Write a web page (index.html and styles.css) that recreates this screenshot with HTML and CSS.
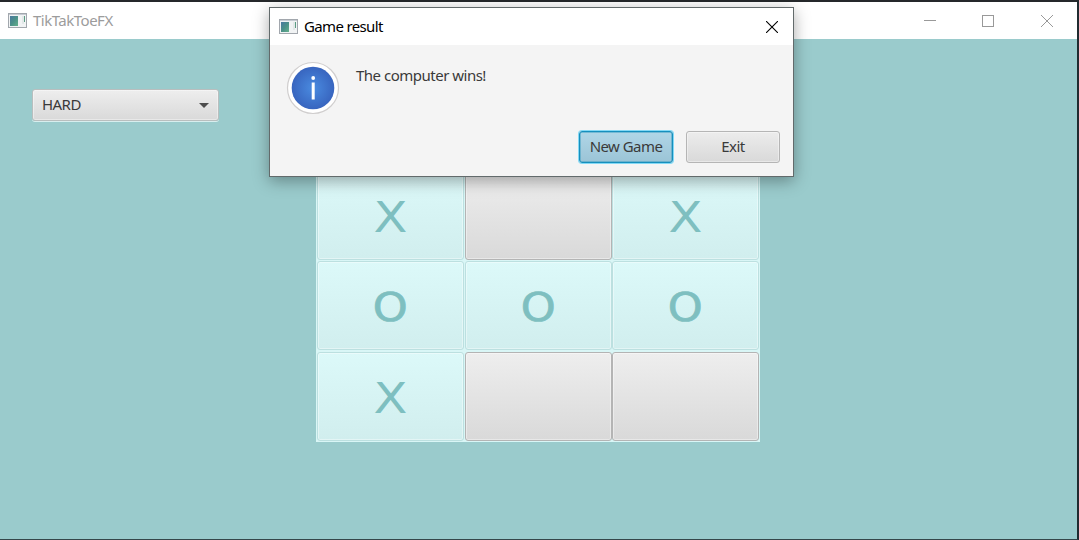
FILE: index.html
```html
<!DOCTYPE html>
<html lang="en">
<head>
<meta charset="utf-8">
<title>TikTakToeFX</title>
<link rel="stylesheet" href="styles.css">
</head>
<body>
<svg width="0" height="0" class="defs">
  <defs>
    <linearGradient id="pane" x1="0" y1="0" x2="1" y2="1"><stop offset="0" stop-color="#4a78a0"/><stop offset=".5" stop-color="#4b9088"/><stop offset="1" stop-color="#65b08c"/></linearGradient>
    <radialGradient id="info"><stop offset="0" stop-color="#4a8be0"/><stop offset="1" stop-color="#3865bf"/></radialGradient>
    <symbol id="app" viewBox="0 0 19 16">
      <rect x=".5" y=".5" width="18" height="14" fill="#f1f3f4" stroke="#a2a7ad"/>
      <path d="M1 1.500h17" stroke="#c6cbd2"/>
      <rect x="2" y="3" width="8" height="10" fill="url(#pane)"/>
      <path d="M16.500 3v6" stroke="#5c9c83"/>
      <path d="M14 3h2v8h-2z" fill="#e2e8e8"/>
    </symbol>
  </defs>
</svg>
<div class="window">
  <header class="titlebar">
    <svg class="app-icon" width="19" height="16"><use href="#app"/></svg>
    <span class="title">TikTakToeFX</span>
    <div class="controls">
      <svg width="12" height="12"><path d="M0 5.500h12" stroke="#999"/></svg>
      <svg width="12" height="12"><rect x=".5" y=".5" width="11" height="11" fill="none" stroke="#999"/></svg>
      <svg width="12" height="12"><path d="M0 0l12 12M12 0L0 12" stroke="#999"/></svg>
    </div>
  </header>
  <main class="scene">
    <div class="combo"><span class="combo-label">HARD</span><svg width="10" height="5"><path d="M0 0h10L5 5z" fill="#4d4d4d"/></svg></div>
    <div class="board">
      <div class="cell played"><span class="x">X</span></div><div class="cell"></div><div class="cell played"><span class="x">X</span></div>
      <div class="cell played"><span class="o">O</span></div><div class="cell played"><span class="o">O</span></div><div class="cell played"><span class="o">O</span></div>
      <div class="cell played"><span class="x">X</span></div><div class="cell"></div><div class="cell"></div>
    </div>
  </main>
</div>
<section class="dialog">
  <header class="dialog-bar">
    <svg class="app-icon" width="19" height="16"><use href="#app"/></svg>
    <span class="dialog-title">Game result</span>
    <svg class="dialog-close" width="12" height="12"><path d="M0 0l12 12M12 0L0 12" stroke="#000" stroke-width="1.1"/></svg>
  </header>
  <div class="dialog-content">
    <svg width="54" height="54">
      <circle cx="27" cy="27" r="25.500" fill="#fff" stroke="#d0cece" stroke-width="1.200"/>
      <circle cx="27" cy="27" r="21.300" fill="url(#info)"/>
      <circle cx="27.200" cy="17" r="1.900" fill="#fff"/>
      <rect x="25.700" y="21.500" width="3" height="17" fill="#fff"/>
    </svg>
    <span class="message">The computer wins!</span>
  </div>
  <footer class="actions">
    <button class="btn primary">New Game</button>
    <button class="btn">Exit</button>
  </footer>
</section>
</body>
</html>
```
FILE: styles.css
```css
* { box-sizing: border-box; }
body { margin: 0; width: 1079px; height: 540px; overflow: hidden; background: #231f20; font-family: "Noto Sans", "Open Sans", sans-serif; font-size: 15px; letter-spacing: -.55px; }
svg { display: block; flex: none; }
.defs { position: absolute; }
span { white-space: nowrap; }
.window { display: flex; flex-direction: column; height: 540px; border: solid #25282b; border-width: 2px 2px 1px 0; border-right-color: #202b30; border-bottom-color: #35474a; }
.titlebar { height: 37px; flex: none; display: flex; align-items: center; padding: 0 24px 0 8px; background: #fff; color: #9c9c9c; }
.title { margin: 0 0 2px 6px; letter-spacing: -.5px; }
.controls { margin-left: auto; display: flex; gap: 47px; }
.controls svg:first-child { margin-right: -1px; }
.scene { flex: 1; display: flex; align-items: flex-start; background: #9acbcc; }
.combo { width: 187px; height: 32px; margin: 50px 0 0 32px; padding: 0 9px 2px 9px; display: flex; align-items: center; justify-content: space-between; border: 1px solid #b9bebe; border-radius: 3px; background: linear-gradient(#eee, #d9d9d9); box-shadow: inset 0 0 0 1px rgba(255,255,255,.4), 0 1px 0 #d8eeee; color: #3a3a3a; }
.combo svg { margin-top: 2px; }
.board { width: 444px; height: 273px; margin: 130px 0 0 97px; padding: 2px 1px; display: grid; grid-template-columns: 148px 147px 147px; grid-template-rows: 90px 91px 89px; background: #d9f6f6; }
.cell { width: 147px; height: 89px; display: flex; align-items: center; justify-content: center; border: 1px solid #b4b4b4; border-radius: 3px; background: linear-gradient(#eee, #d9d9d9); box-shadow: inset 0 0 0 1px rgba(255,255,255,.4); font: 42px/1 "DejaVu Sans", sans-serif; letter-spacing: 0; }
.cell span { margin-top: 4px; }
.x { transform: scaleX(1.18); }
.o { font-size: 39px; transform: scaleX(1.14); -webkit-text-stroke: .7px #7ebfc0; }
.played { border-color: #bce0e0; background: linear-gradient(#dcf9f9, #d1eeee); color: #7ebfc0; }
.dialog { position: absolute; left: 269px; top: 7px; width: 525px; height: 170px; border: 1px solid #626a6b; background: #f4f4f4; box-shadow: 0 4px 15px rgba(0,0,0,.34); display: flex; flex-direction: column; }
.dialog-bar { height: 37px; display: flex; align-items: center; padding: 0 15px 0 9px; background: #fff; color: #000; }
.dialog-title { margin: 0 0 2px 6px; letter-spacing: -.65px; }
.dialog-close { margin-left: auto; }
.dialog-content { display: flex; align-items: flex-start; padding: 16px 0 0 16px; gap: 16px; color: #3a3a3a; }
.message { margin-top: 4px; letter-spacing: -.5px; }
.actions { display: flex; justify-content: flex-end; gap: 13px; margin-top: auto; padding: 0 13px 13px; }
.btn { width: 94px; height: 32px; padding: 0 0 2px; border: 1px solid #b5b5b5; border-radius: 3px; background: linear-gradient(#ececec, #d9d9d9); box-shadow: inset 0 0 0 1px rgba(255,255,255,.4); color: #3a3a3a; font: inherit; letter-spacing: inherit; }
.primary { border-color: #168fbd; background: linear-gradient(#b0d6e7, #9bc4d6); box-shadow: 0 0 0 1px #83d9f5, inset 0 0 0 .5px #3b9dc1; }
```
